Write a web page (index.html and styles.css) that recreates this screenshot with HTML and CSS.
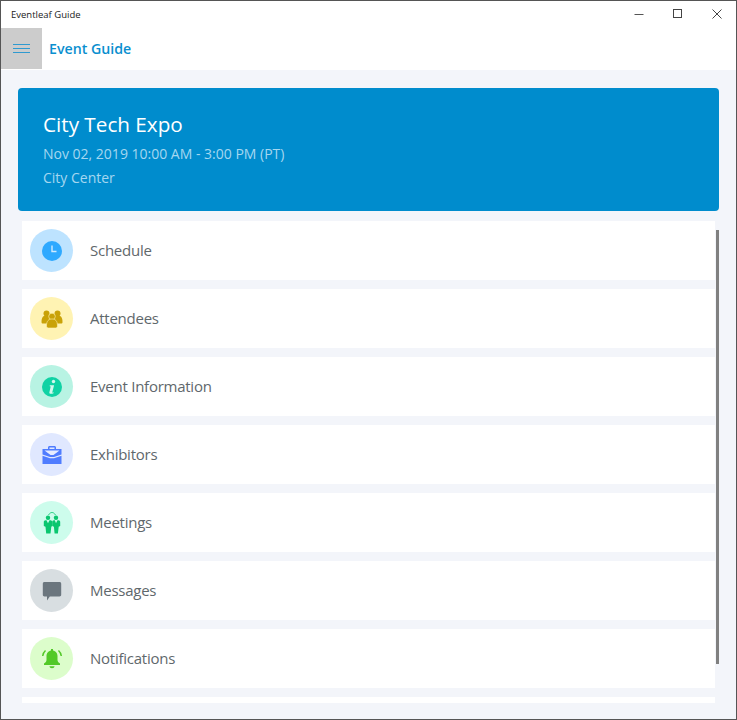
FILE: index.html
```html
<!DOCTYPE html>
<html lang="en">
<head>
    <meta charset="UTF-8">
    <meta name="viewport" content="width=device-width, initial-scale=1.0">
    <title>Eventleaf Guide</title>
    <link rel="stylesheet" href="styles.css">
</head>
<body>
    <div class="window">
        <div class="titlebar">
            <span class="app-name">Eventleaf Guide</span>
            <div class="win-controls">
                <div class="win-btn"><svg width="12" height="12" viewBox="0 0 12 12"><path d="M1.500 6.500h9" stroke="#555" fill="none"/></svg></div>
                <div class="win-btn"><svg width="12" height="12" viewBox="0 0 12 12"><rect x="1.500" y="1.500" width="8" height="8" stroke="#444" fill="none"/></svg></div>
                <div class="win-btn"><svg width="12" height="12" viewBox="0 0 12 12"><path d="M1.500 1.500l9 9M10.500 1.500l-9 9" stroke="#444" fill="none"/></svg></div>
            </div>
        </div>
        <div class="header">
            <div class="menu-btn">
                <svg width="18" height="10" viewBox="0 0 18 10"><path d="M0 .5h17M0 4.500h17M0 8.500h17" stroke="#2f9ad0" fill="none"/></svg>
            </div>
            <span class="page-title">Event Guide</span>
        </div>
        <div class="content">
            <div class="hero">
                <h1>City Tech Expo</h1>
                <p class="hero-date">Nov 02, 2019 10:00 AM - 3:00 PM (PT)</p>
                <p class="hero-place">City Center</p>
            </div>
            <div class="list">
                <div class="row">
                    <div class="badge badge-blue">
                        <svg width="24" height="24" viewBox="0 0 24 24"><circle cx="12" cy="12" r="10" fill="#2ea9ff"/><path d="M12 6.500v6h4.500" stroke="#cfeaff" stroke-width="1.400" fill="none"/></svg>
                    </div>
                    <span>Schedule</span>
                </div>
                <div class="row">
                    <div class="badge badge-yellow">
                        <svg width="24" height="24" viewBox="0 0 24 24" fill="#c9a208"><circle cx="6.500" cy="6.500" r="3"/><circle cx="17.500" cy="6.500" r="3"/><path d="M1.500 15c0-4.500 1.500-6.500 5-6.500s5 2 5 6.500c0 1-.5 1.500-1.500 1.500H3c-1 0-1.500-.5-1.500-1.500z"/><path d="M12.500 15c0-4.500 1.500-6.500 5-6.500s5 2 5 6.500c0 1-.5 1.500-1.500 1.500h-7c-1 0-1.500-.5-1.500-1.500z"/><circle cx="12" cy="9.500" r="3.300" stroke="#fff3b3" stroke-width=".6"/><path d="M6.500 19c0-5 2-7 5.500-7s5.500 2 5.500 7c0 1.200-.8 2-2 2h-7c-1.200 0-2-.8-2-2z" stroke="#fff3b3" stroke-width=".6"/></svg>
                    </div>
                    <span>Attendees</span>
                </div>
                <div class="row">
                    <div class="badge badge-teal">
                        <svg width="24" height="24" viewBox="0 0 24 24"><circle cx="12" cy="12" r="10" fill="#10d2a4"/><circle cx="13.500" cy="6.500" r="1.700" fill="#d4f8ee"/><path d="M9.800 10.200h4.300l-1.800 7c-.1.500.4.600 1.400.1l-.2.900c-2.200 1.100-4.600.9-4.100-1l1.300-5.800-1-.2z" fill="#d4f8ee"/></svg>
                    </div>
                    <span>Event Information</span>
                </div>
                <div class="row">
                    <div class="badge badge-indigo">
                        <svg width="24" height="24" viewBox="0 0 24 24"><path d="M8 6V4.500C8 3.700 8.700 3 9.500 3h5c.8 0 1.500.7 1.500 1.500V6h-1.500V4.500h-5V6z" fill="#4f7cff"/><path d="M2.500 6h19v5.500l-7.500 2.500h-4L2.500 11.500z" fill="#4f7cff"/><path d="M4.500 7.500h15l-6 4.500h-3z" fill="#e6ecff"/><path d="M2.500 12.800L10 15.300h4l7.500-2.500V21h-19z" fill="#4f7cff"/></svg>
                    </div>
                    <span>Exhibitors</span>
                </div>
                <div class="row">
                    <div class="badge badge-mint">
                        <svg width="24" height="24" viewBox="0 0 24 24" fill="#0ac66f"><path d="M8.500 4C9.500 2.300 10.700 1.500 12 1.500s2.500.8 3.500 2.500" stroke="#0ac66f" stroke-width=".8" fill="none"/><circle cx="8" cy="6.800" r="2.200"/><circle cx="16" cy="6.800" r="2.200"/><path d="M3.800 11c0-1 .7-1.800 1.700-1.800h1l1.500 3 1.500-3h1c1 0 1.700.8 1.700 1.800v4l-.9.800-.8 6.700H6.200l-.7-6.700-1.700-.8z"/><path d="M12.200 11c0-1 .7-1.800 1.700-1.800h.9l1.200 3 1.500-3h1c1 0 1.700.8 1.700 1.800v4l-1.500.8-.8 6.700h-3.300l-.7-6.700-1.700-.8z"/></svg>
                    </div>
                    <span>Meetings</span>
                </div>
                <div class="row">
                    <div class="badge badge-grey">
                        <svg width="24" height="24" viewBox="0 0 24 24"><path d="M4.500 3h15c1 0 1.700.7 1.700 1.700v11.100c0 1-.7 1.700-1.700 1.700H9.800L7 21.500v-4H4.500c-1 0-1.700-.7-1.700-1.700V4.700C2.800 3.700 3.500 3 4.500 3z" fill="#6b767e"/></svg>
                    </div>
                    <span>Messages</span>
                </div>
                <div class="row">
                    <div class="badge badge-green">
                        <svg width="24" height="24" viewBox="0 0 24 24"><path d="M12 3.500c3.500 0 5.500 2.500 5.500 5.500v4c0 1.500 1 2.500 2.500 3.500V18H4v-1.500c1.500-1 2.500-2 2.500-3.500V9c0-3 2-5.500 5.500-5.500z" fill="#52c927"/><rect x="11" y="2" width="2" height="2.500" fill="#52c927"/><path d="M9.500 19.300h5c0 1.200-1 1.900-2.500 1.900s-2.500-.7-2.500-1.900z" fill="#52c927"/><path d="M5.500 3.500C3.800 5 3 6.500 2.700 9M18.500 3.500C20.200 5 21 6.500 21.300 9" stroke="#52c927" stroke-width="1.500" fill="none"/></svg>
                    </div>
                    <span>Notifications</span>
                </div>
                <div class="row"></div>
                <div class="scrollbar"></div>
            </div>
        </div>
    </div>
</body>
</html>
```

FILE: styles.css
```css
* {
    box-sizing: border-box;
}

body {
    margin: 0;
    font-family: "Open Sans", sans-serif;
    background-color: #f3f5fa;
}

.window {
    height: 720px;
    display: flex;
    flex-direction: column;
    border: 1px solid #555;
    overflow: hidden;
}

.titlebar {
    height: 27px;
    flex: none;
    display: flex;
    align-items: center;
    justify-content: space-between;
    padding-left: 10px;
    padding-bottom: 1px;
    background-color: #fff;
}

.app-name {
    font-size: 9.5px;
    color: #222;
}

.win-controls {
    display: flex;
}

.win-btn {
    width: 39px;
    height: 26px;
    display: flex;
    align-items: center;
    justify-content: center;
}

.header {
    height: 42px;
    flex: none;
    display: flex;
    background-color: #fff;
}

.menu-btn {
    width: 41px;
    height: 41px;
    display: flex;
    align-items: center;
    justify-content: center;
    background-color: #ccc;
}

.page-title {
    margin-left: 7px;
    font-size: 14.2px;
    line-height: 41px;
    font-weight: 600;
    color: #0a8fcf;
}

.content {
    flex: 1;
    min-height: 0;
    display: flex;
    flex-direction: column;
    padding: 18px 17px 16px;
}

.hero {
    height: 123px;
    flex: none;
    padding: 21px 25px;
    border-radius: 4px;
    background-color: #008ccd;
    color: #fff;
}

.hero h1 {
    margin: 0;
    font-size: 20.7px;
    line-height: 30px;
    font-weight: 400;
}

.hero-date,
.hero-place {
    margin: 0;
    font-size: 14px;
    line-height: 24px;
    color: #a5d7f0;
}

.hero-date {
    margin-top: 3px;
}

.list {
    position: relative;
    flex: 1;
    min-height: 0;
    margin-top: 10px;
    padding: 0 4px;
    display: flex;
    flex-direction: column;
    gap: 9px;
    overflow: hidden;
}

.row {
    height: 59px;
    flex: none;
    display: flex;
    align-items: center;
    gap: 17px;
    padding-left: 8px;
    background-color: #fff;
    font-size: 15px;
    letter-spacing: -0.25px;
    color: #5f686c;
}

.row span {
    margin-bottom: 2px;
}

.badge {
    width: 43px;
    height: 43px;
    display: flex;
    align-items: center;
    justify-content: center;
    border-radius: 50%;
}

.badge-blue { background-color: #bde3ff; }
.badge-yellow { background-color: #fff3b3; }
.badge-teal { background-color: #b8f3e3; }
.badge-indigo { background-color: #e0e8ff; }
.badge-mint { background-color: #cdfcec; }
.badge-grey { background-color: #d8dee1; }
.badge-green { background-color: #dcfdcb; }

.scrollbar {
    position: absolute;
    top: 9px;
    right: 0;
    width: 3px;
    height: 434px;
    background-color: #808080;
}
```
